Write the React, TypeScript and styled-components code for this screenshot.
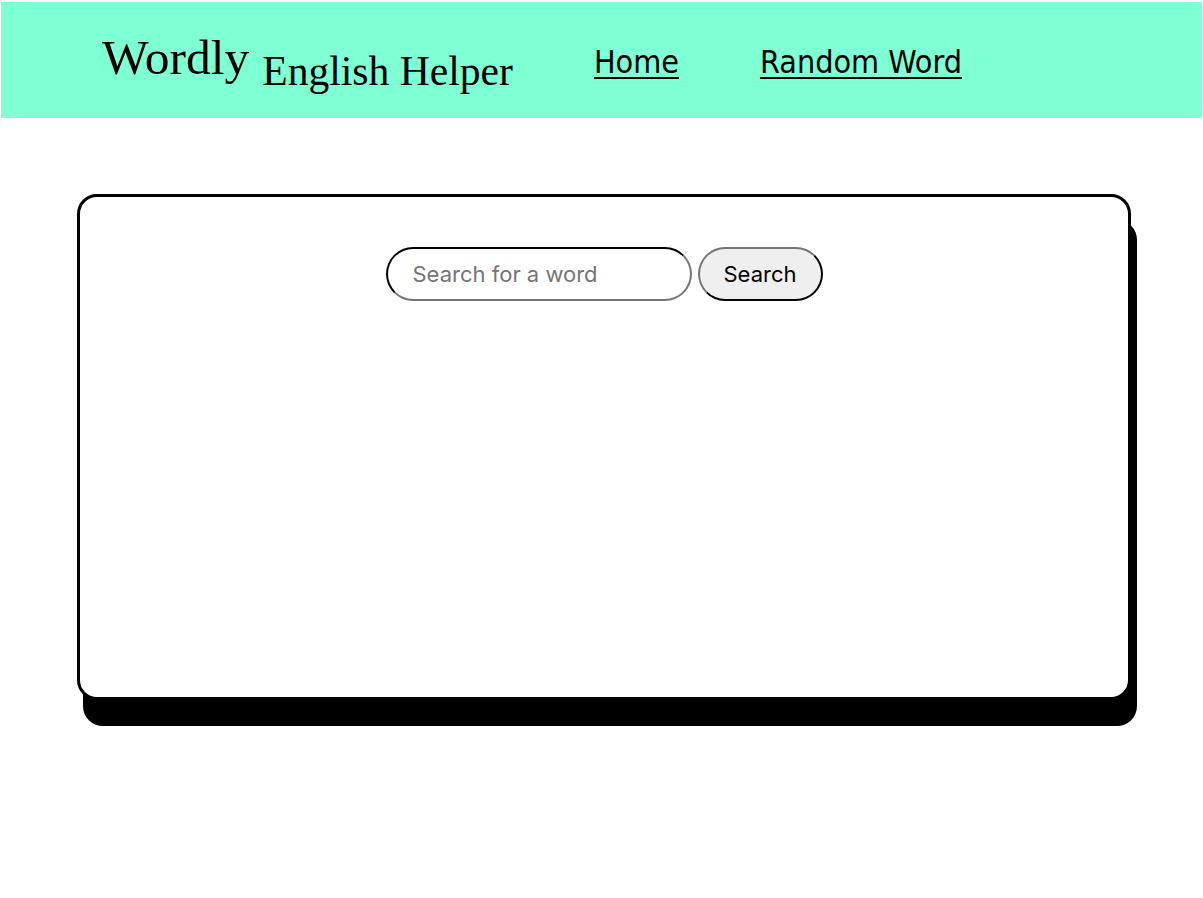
import styled, { createGlobalStyle } from "styled-components";

const GlobalStyle = createGlobalStyle`
  body {
    margin: 0;
    background: #fff;
    font-family: "Liberation Serif", serif;
  }
`;

const App = () => {
  return (
    <>
      <GlobalStyle />
      <Header>
        <Brand>
          Wordly <Tagline>English Helper</Tagline>
        </Brand>
        <Nav>
          <NavLink href="#">Home</NavLink>
          <NavLink href="#">Random Word</NavLink>
        </Nav>
      </Header>
      <Main>
        <Card>
          <SearchForm onSubmit={(e) => e.preventDefault()}>
            <SearchInput type="text" placeholder="Search for a word" />
            <SearchButton type="submit">Search</SearchButton>
          </SearchForm>
        </Card>
      </Main>
    </>
  );
};

export default App;

const Header = styled.header`
  margin: 2px 1px 0 1px;
  height: 116px;
  background-color: #7fffd4;
  display: flex;
  align-items: center;
  gap: 81px;
  padding: 0 0 4px 101px;
  box-sizing: border-box;
`;

const Brand = styled.h1`
  margin: 0;
  font-family: "Liberation Serif", serif;
  font-weight: 400;
  font-size: 49.5px;
  line-height: 1;
  color: #000;
  display: flex;
  align-items: baseline;
  gap: 13px;
`;

const Tagline = styled.span`
  font-size: 41.6px;
  transform: translateY(11px);
`;

const Nav = styled.nav`
  display: flex;
  gap: 81px;
  padding-top: 8px;
`;

const NavLink = styled.a`
  font-family: "DejaVu Sans Condensed", "Liberation Sans", sans-serif;
  font-stretch: condensed;
  font-size: 32px;
  color: #000;
  text-decoration: underline;
  text-underline-offset: 4px;
  text-decoration-thickness: 2px;
`;

const Main = styled.main`
  padding: 76px 72px 180px 77px;
`;

const Card = styled.section`
  height: 506px;
  box-sizing: border-box;
  border: 3px solid #000;
  border-radius: 20px;
  background: #fff;
  box-shadow: 6px 26px 0 0 #000;
  padding-top: 50px;
`;

const SearchForm = styled.form`
  display: flex;
  justify-content: center;
  gap: 6px;
`;

const SearchInput = styled.input`
  width: 306px;
  height: 54px;
  box-sizing: border-box;
  border: 2px inset #767676;
  border-top-color: #1a1a1a;
  border-left-color: #1a1a1a;
  border-radius: 27px;
  padding: 0 25px;
  font-family: "Inter", sans-serif;
  font-size: 22px;
  color: #000;
  outline: none;
  &::placeholder {
    color: #757575;
  }
`;

const SearchButton = styled.button`
  width: 125px;
  height: 54px;
  box-sizing: border-box;
  border: 2px outset #767676;
  border-bottom-color: #000;
  border-right-color: #000;
  border-radius: 27px;
  background: #efefef;
  font-family: "Inter", sans-serif;
  font-size: 22px;
  color: #000;
  padding: 0;
`;
